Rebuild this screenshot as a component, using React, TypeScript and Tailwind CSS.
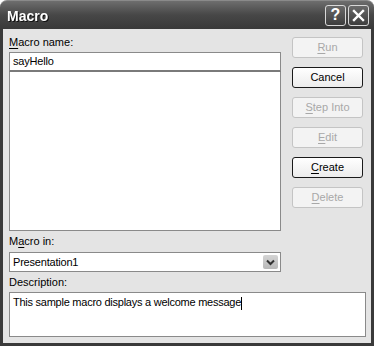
import React from "react";

const font = { fontFamily: "Tahoma, 'Liberation Sans', Arial, sans-serif" };

function Btn({ u, rest, enabled, pre = "" }: { u: string; rest: string; enabled?: boolean; pre?: string }) {
  return (
    <div
      className={
        "h-[21px] w-[71px] rounded-[3px] flex items-center justify-center text-[11px] " +
        (enabled
          ? "border border-[#1a1a1a] bg-gradient-to-b from-white to-[#ececec] text-black"
          : "border border-[#c4c4c4] bg-[#f3f3f3] text-[#a8a8a8]")
      }
    >
      <span>
        {pre}
        <span className="underline underline-offset-2">{u}</span>
        {rest}
      </span>
    </div>
  );
}

export default function App() {
  return (
    <div className="w-[374px] h-[346px] flex flex-col overflow-hidden" style={font}>
      {/* title bar */}
      <div className="h-[29px] shrink-0 rounded-t-[7px] bg-gradient-to-b from-[#6e6e6e] via-[#474747] to-[#393939] border-t border-[#8a8a8a] flex items-center pl-[7px] pr-[5px]">
        <span className="text-white font-bold text-[14px] pt-[2px] drop-shadow-[1px_1px_0_#111]" style={{ fontFamily: "'Liberation Sans', Arial, sans-serif" }}>
          Macro
        </span>
        <div className="ml-auto flex gap-[2px]">
          <div className="w-[21px] h-[21px] rounded-[3px] border border-[#d8d8d8] bg-gradient-to-b from-[#6a6a6a] to-[#3e3e3e] flex items-center justify-center text-white font-bold text-[16px]" style={{ fontFamily: "'Liberation Sans', Arial, sans-serif" }}>
            ?
          </div>
          <div className="w-[21px] h-[21px] rounded-[3px] border border-[#d8d8d8] bg-gradient-to-b from-[#6a6a6a] to-[#3e3e3e] flex items-center justify-center">
            <svg width="13" height="13" viewBox="0 0 13 13">
              <path d="M2 2 L11 11 M11 2 L2 11" stroke="white" strokeWidth="2.4" strokeLinecap="square" />
            </svg>
          </div>
        </div>
      </div>
      {/* body */}
      <div className="flex-1 bg-[#3a3a3a] px-[3px] pb-[3px] flex">
        <div className="flex-1 bg-[#e4e4e4] flex pl-[6px] pr-[8px] pt-[3px] text-[11px] text-black">
          <div className="flex flex-col w-[272px]">
            <div className="h-[20px] flex items-center">
              <span><span className="underline underline-offset-2">M</span>acro name:</span>
            </div>
            <div className="h-[20px] border border-[#8a8a8a] border-b-[2px] border-b-[#7a7a7a] bg-white flex items-center pl-[3px] tracking-[-0.2px]">
              sayHello
            </div>
            <div className="h-[159px] border border-t-0 border-[#8a8a8a] bg-white" />
            <div className="h-[21px] flex items-center">
              <span>M<span className="underline underline-offset-2">a</span>cro in:</span>
            </div>
            <div className="h-[20px] border border-[#8a8a8a] bg-white flex items-center pl-[3px] pr-[2px] tracking-[-0.2px]">
              <span>Presentation1</span>
              <div className="ml-auto w-[15px] h-[14px] rounded-[2px] bg-gradient-to-b from-[#d4d4d4] to-[#b8b8b8] flex items-center justify-center">
                <svg width="9" height="7" viewBox="0 0 9 7">
                  <path d="M1 1.5 L4.5 5 L8 1.5" stroke="#333" strokeWidth="2" fill="none" />
                </svg>
              </div>
            </div>
            <div className="h-[20px] flex items-center">
              <span>Description:</span>
            </div>
            <div className="h-[45px] w-[357px] border border-[#8a8a8a] bg-white pl-[3px] pt-[3px] leading-[13px] tracking-[-0.25px]">
              This sample macro displays a welcome message<span className="inline-block w-px h-[13px] bg-black align-middle" />
            </div>
          </div>
          <div className="ml-auto flex flex-col gap-[9px] pt-[5px]">
            <Btn u="R" rest="un" />
            <Btn u="" rest="Cancel" enabled />
            <Btn u="S" rest="tep Into" />
            <Btn u="E" rest="dit" />
            <Btn u="C" rest="reate" enabled />
            <Btn u="D" rest="elete" />
          </div>
        </div>
      </div>
    </div>
  );
}
